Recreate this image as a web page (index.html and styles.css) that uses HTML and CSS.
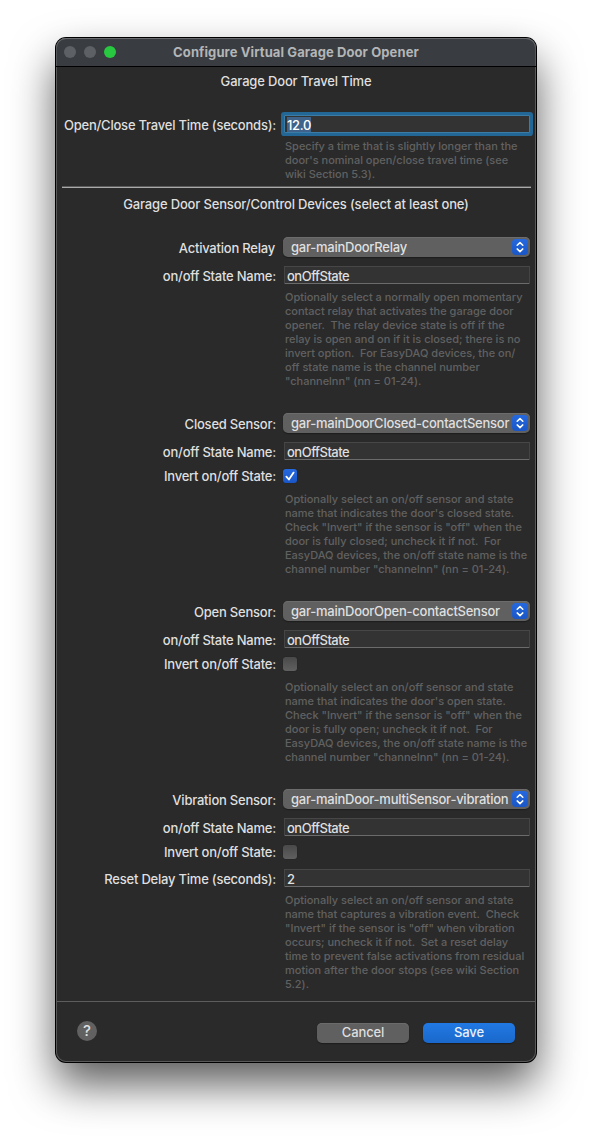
FILE: index.html
```html
<!DOCTYPE html>
<html lang="en">
<head>
<meta charset="utf-8">
<title>Configure Virtual Garage Door Opener</title>
<link rel="stylesheet" href="styles.css">
</head>
<body>
<svg class="defs" width="0" height="0" aria-hidden="true">
  <symbol id="stepper" viewBox="0 0 16 16"><path d="M5.2 6.3 8 3.6l2.8 2.7M5.2 9.9 8 12.6l2.8-2.7"/></symbol>
</svg>
<main class="window">
  <header class="titlebar">
    <div class="lights"><i></i><i></i><i class="green"></i></div>
    <h1>Configure Virtual Garage Door Opener</h1>
  </header>

  <section class="travel">
    <h2>Garage Door Travel Time</h2>
    <div class="row row-focus"><label>Open/Close Travel Time (seconds):</label><div class="field focused"><span class="selected">12.0</span></div></div>
    <p class="hint">Specify a time that is slightly longer than the
door's nominal open/close travel time (see
wiki Section 5.3).</p>
  </section>
  <hr class="rule">
  <section class="devices">
    <h2>Garage Door Sensor/Control Devices (select at least one)</h2>

    <div class="group">
      <div class="row row-select"><label class="no-colon">Activation Relay</label><div class="select"><span>gar-mainDoorRelay</span><svg class="stepper"><use href="#stepper"/></svg></div></div>
      <div class="row"><label>on/off State Name:</label><div class="field">onOffState</div></div>
      <p class="hint">Optionally select a normally open momentary
contact relay that activates the garage door
opener.  The relay device state is off if the
relay is open and on if it is closed; there is no
invert option.  For EasyDAQ devices, the on/
off state name is the channel number
"channelnn" (nn = 01-24).</p>
    </div>

    <div class="group">
      <div class="row row-select"><label>Closed Sensor:</label><div class="select"><span>gar-mainDoorClosed-contactSensor</span><svg class="stepper"><use href="#stepper"/></svg></div></div>
      <div class="row"><label>on/off State Name:</label><div class="field">onOffState</div></div>
      <div class="row row-check"><label>Invert on/off State:</label><div class="check checked"><svg viewBox="0 0 14 14"><path d="M3.4 7.6 5.9 10.5 10.6 3.6"/></svg></div></div>
      <p class="hint after-check">Optionally select an on/off sensor and state
name that indicates the door's closed state.
Check "Invert" if the sensor is "off" when the
door is fully closed; uncheck it if not.  For
EasyDAQ devices, the on/off state name is the
channel number "channelnn" (nn = 01-24).</p>
    </div>

    <div class="group">
      <div class="row row-select"><label>Open Sensor:</label><div class="select"><span>gar-mainDoorOpen-contactSensor</span><svg class="stepper"><use href="#stepper"/></svg></div></div>
      <div class="row"><label>on/off State Name:</label><div class="field">onOffState</div></div>
      <div class="row row-check"><label>Invert on/off State:</label><div class="check"></div></div>
      <p class="hint after-check">Optionally select an on/off sensor and state
name that indicates the door's open state.
Check "Invert" if the sensor is "off" when the
door is fully open; uncheck it if not.  For
EasyDAQ devices, the on/off state name is the
channel number "channelnn" (nn = 01-24).</p>
    </div>

    <div class="group">
      <div class="row row-select"><label>Vibration Sensor:</label><div class="select"><span>gar-mainDoor-multiSensor-vibration</span><svg class="stepper"><use href="#stepper"/></svg></div></div>
      <div class="row"><label>on/off State Name:</label><div class="field">onOffState</div></div>
      <div class="row row-check"><label>Invert on/off State:</label><div class="check"></div></div>
      <div class="row row-delay"><label>Reset Delay Time (seconds):</label><div class="field">2</div></div>
      <p class="hint">Optionally select an on/off sensor and state
name that captures a vibration event.  Check
"Invert" if the sensor is "off" when vibration
occurs; uncheck it if not.  Set a reset delay
time to prevent false activations from residual
motion after the door stops (see wiki Section
5.2).</p>
    </div>
  </section>

  <footer class="footer">
    <div class="help">?</div>
    <div class="button">Cancel</div>
    <div class="button primary">Save</div>
  </footer>
</main>
</body>
</html>
```
FILE: styles.css
```css
* { box-sizing: border-box; }
body {
  margin: 0;
  height: 1136px;
  overflow: hidden;
  padding: 38px 56px 0;
  background: #fff;
  color: #dfdfdf;
  font: 500 13px/16px Inter, "Liberation Sans", sans-serif;
}
.defs { position: absolute; }
.window {
  width: 480px;
  height: 1024px;
  display: flex;
  flex-direction: column;
  border-radius: 10px;
  background: #2a2a2a;
  box-shadow: inset 0 0 0 1px #58595a, 0 0 0 1px #000, 0 22px 44px rgba(0, 0, 0, .65);
}
.titlebar {
  height: 29px;
  display: grid;
  grid-template-columns: 64px 1fr 64px;
  align-items: center;
  border-bottom: 1px solid #000;
  border-radius: 10px 10px 0 0;
  background: #393c40;
  box-shadow: inset 0 1px 0 #696b6e, inset 1px 0 0 #55585b, inset -1px 0 0 #55585b;
}
.titlebar h1 {
  margin: 0;
  text-align: center;
  font-size: 13px;
  line-height: 16px;
  font-weight: 700;
  letter-spacing: .1px;
  color: #b3b5b7;
  white-space: nowrap;
}
.lights { display: flex; gap: 8px; padding-left: 8px; }
.lights i { width: 12px; height: 12px; border-radius: 50%; background: #5d6064; flex: none; }
.lights .green { background: #28c941; }
h2 {
  margin: 0;
  font: inherit;
  letter-spacing: -.165px;
  text-align: center;
  white-space: nowrap;
}
.travel { padding-top: 6px; height: 119px; }
.row {
  display: grid;
  grid-template-columns: 220px 246px;
  column-gap: 8px;
  height: 18px;
}
.row label { text-align: right; white-space: nowrap; padding-top: 2px; letter-spacing: -.22px; }
.row label.no-colon { padding-right: 1px; }
.row-focus { margin-top: 26px; }
.field {
  height: 18px;
  padding: 2px 0 0 3px;
  line-height: 16px;
  letter-spacing: -.5px;
  background: #333;
  box-shadow: inset 0 1px #474747, inset 1px 0 #444, inset -1px 0 #444, inset 0 -1px #6b6b6b;
}
.field.focused {
  box-shadow: inset 0 0 0 1px #3b7ca7, 0 0 0 3px #236796;
  border-radius: 1px;
  letter-spacing: -.35px;
}
.selected { display: block; width: 24px; height: 15px; background: #3f638b; color: #fff; }
.hint {
  margin: 6px 0 0 229px;
  font-size: 11px;
  line-height: 14px;
  letter-spacing: -.01px;
  color: #616161;
  white-space: pre;
}
.rule {
  width: 469px;
  height: 2px;
  margin: 0 0 0 6px;
  border: 0;
  background: linear-gradient(#5b5b5b 50%, #a9a9a9 50%);
}
.devices { padding-top: 8px; height: 813px; }
.group { margin-top: 25px; }
.row-select {
  grid-template-columns: 220px 247px;
  column-gap: 7px;
  height: 20px;
  margin-bottom: 9px;
}
.row-select label { padding-top: 3px; }
.select {
  height: 20px;
  display: flex;
  align-items: center;
  justify-content: space-between;
  padding: 0 2px 0 8px;
  border-radius: 5px;
  background: #606060;
  box-shadow: inset 0 1px #6c6c6c, 0 1px 1px #1d1d1d;
  letter-spacing: -.25px;
  white-space: nowrap;
}
.stepper {
  flex: none;
  width: 16px;
  height: 16px;
  border-radius: 4px;
  background: linear-gradient(#2569df, #1a56c6);
  fill: none;
  stroke: #fff;
  stroke-width: 1.5;
  stroke-linecap: round;
  stroke-linejoin: round;
}
.row-check { margin-top: 9px; height: 14px; grid-template-columns: 220px 14px; column-gap: 7px; }
.row-check label { padding-top: 0; line-height: 14px; }
.check {
  width: 14px;
  height: 14px;
  border-radius: 3px;
  background: linear-gradient(#494949, #606060);
  box-shadow: 0 0 1px #1d1d1d;
}
.check.checked { background: linear-gradient(#2569df, #1a56c6); }
.check svg { display: block; width: 14px; height: 14px; fill: none; stroke: #fff; stroke-width: 1.8; stroke-linecap: round; stroke-linejoin: round; }
.after-check { margin-top: 9px; }
.row-delay { margin-top: 10px; }
.footer {
  flex: 1;
  display: flex;
  align-items: flex-start;
  margin: 0 1px;
  padding: 21px 20px 0;
  border-top: 1px solid #5d5d5d;
}
.help {
  width: 20px;
  height: 20px;
  margin: -2px 220px 0 0;
  border-radius: 50%;
  background: #616161;
  text-align: center;
  font-size: 15px;
  line-height: 20px;
}
.button {
  width: 92px;
  height: 20px;
  border-radius: 5px;
  background: #606060;
  box-shadow: inset 0 1px #6b6b6b, 0 1px 1px #1d1d1d;
  text-align: center;
  letter-spacing: -.1px;
  line-height: 19px;
}
.primary {
  margin-left: 14px;
  background: linear-gradient(#2179e3, #1a68cb);
  box-shadow: 0 1px 1px #1d1d1d;
  color: #eaf1fb;
}
```
